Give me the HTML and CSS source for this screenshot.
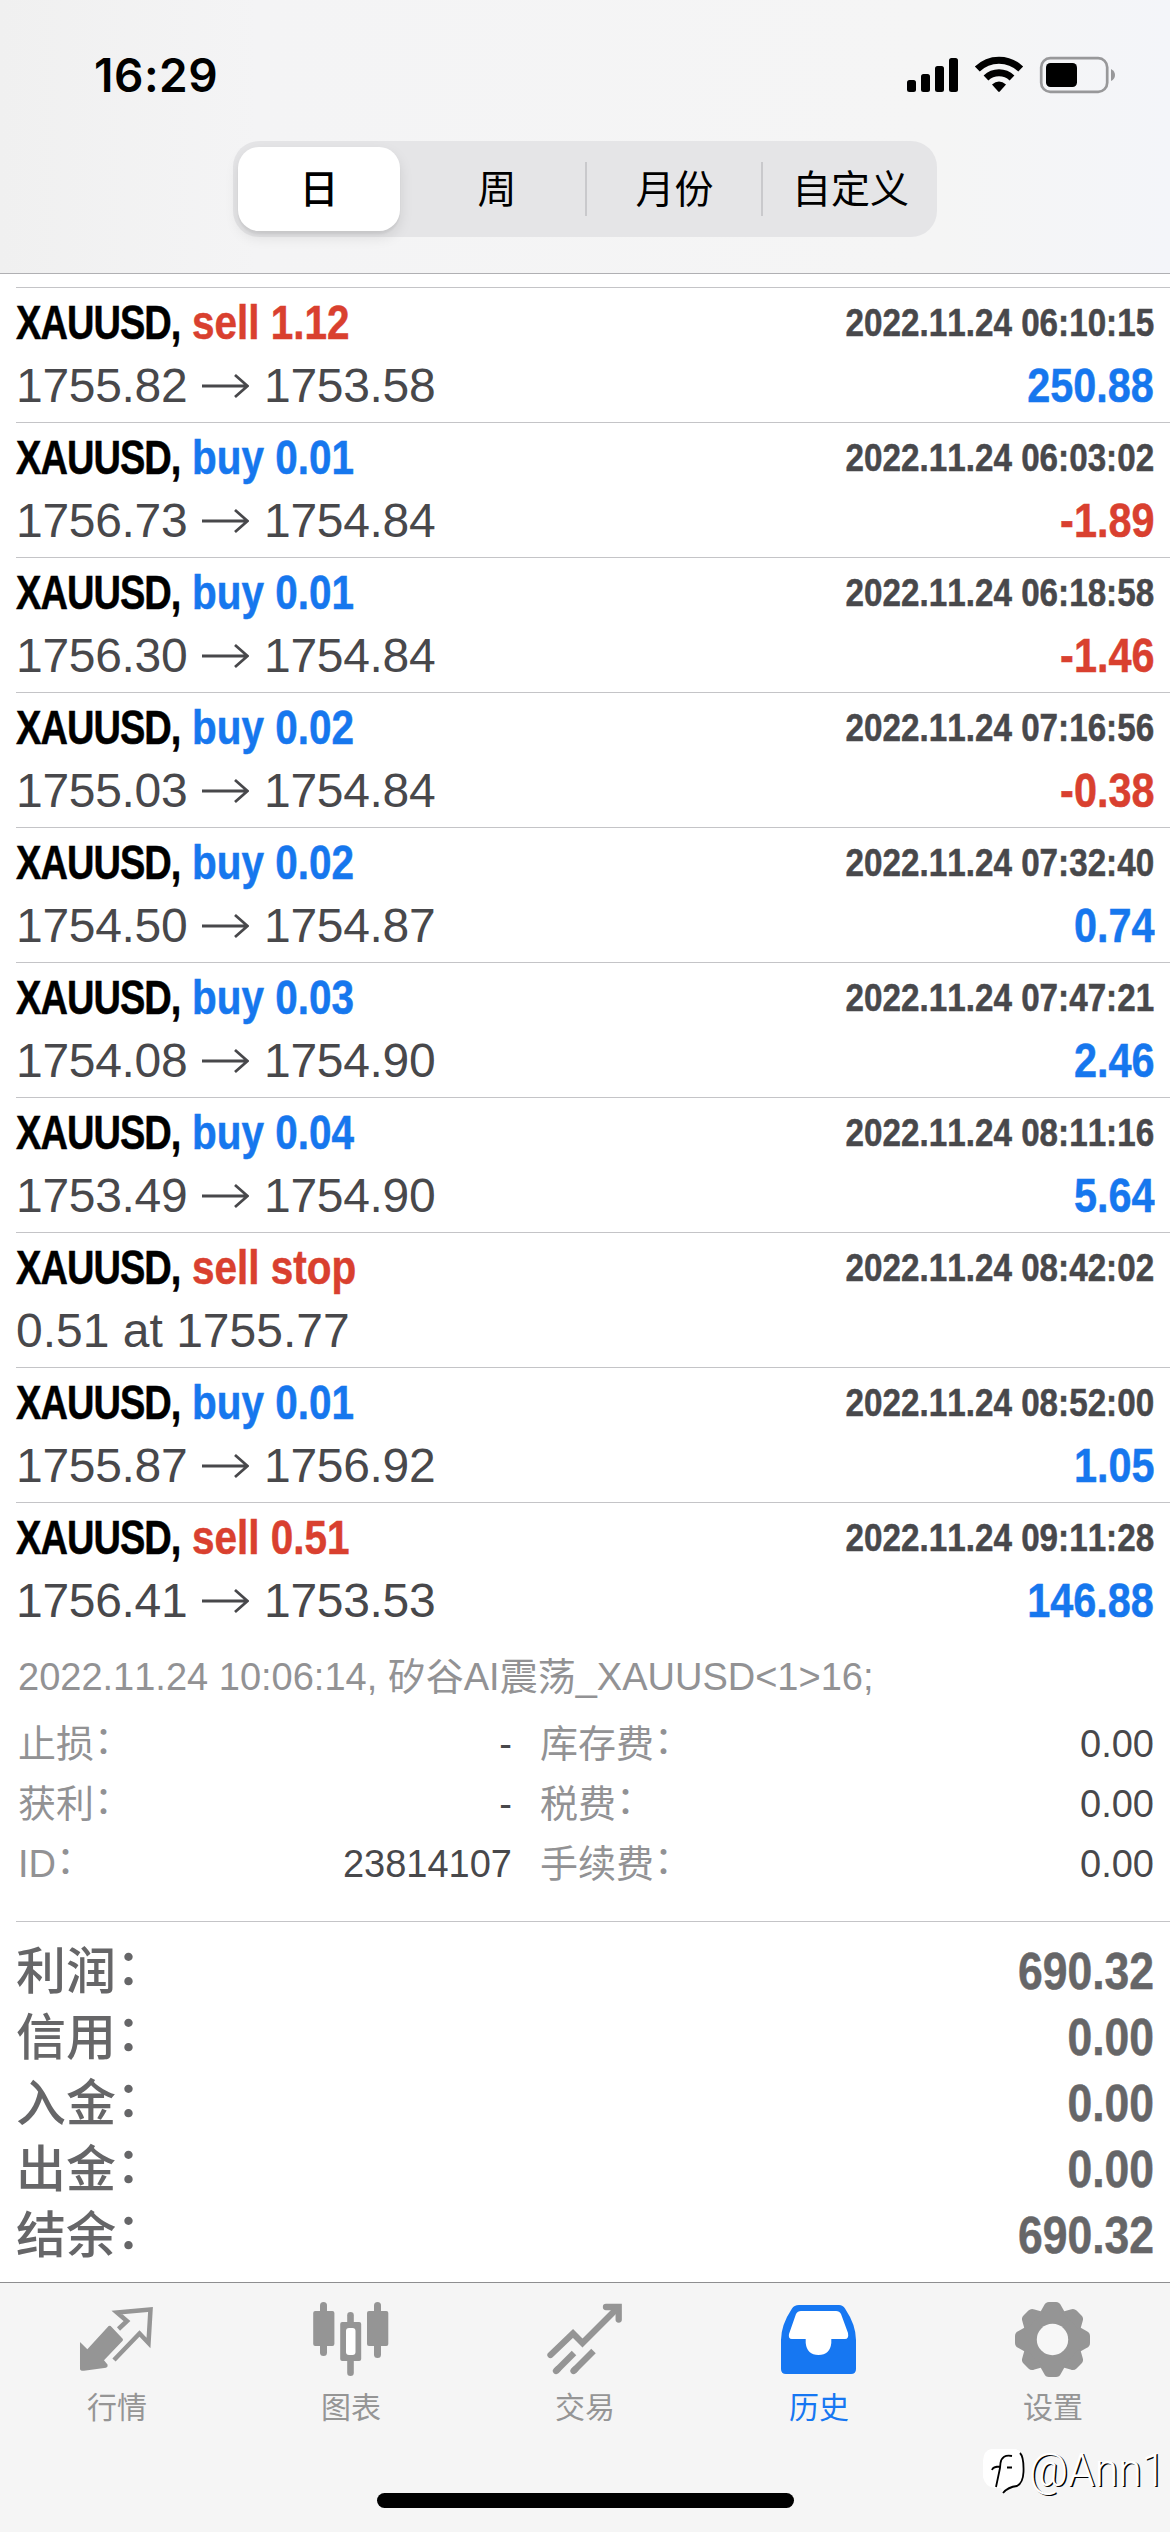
FILE: index.html
```html
<!DOCTYPE html>
<html lang="zh-CN">
<head>
<meta charset="utf-8">
<title>历史</title>
<link rel="stylesheet" href="styles.css">
</head>
<body>
<div class="screen">
  <header class="header">
    <div class="status">
      <span class="clock">16:29</span>
      <svg class="status-icons" width="212" height="40" viewBox="905 54 212 40">
        <rect x="907" y="79" width="9" height="12" rx="2.5"/>
        <rect x="921" y="73" width="9" height="18" rx="2.5"/>
        <rect x="935" y="65" width="9" height="26" rx="2.5"/>
        <rect x="949" y="57" width="9" height="34" rx="2.5"/>
        <g fill="none" stroke="#000" stroke-width="7">
          <path d="M977.300 68 A31 31 0 0 1 1020.700 68"/>
          <path d="M986 77 A19 19 0 0 1 1012 77"/>
        </g>
        <path d="M992 83.500 Q999 77.500 1006 83.500 L999.800 90.500 Q999 91.300 998.200 90.500 Z"/>
        <rect x="1041.200" y="57.200" width="66" height="33.600" rx="9" fill="none" stroke="#98989a" stroke-width="2.700"/>
        <rect x="1046" y="62" width="31" height="24" rx="4.500"/>
        <path d="M1111 68 Q1115 70 1115 74 Q1115 78 1111 80 Z" fill="#98989a"/>
      </svg>
    </div>
    <nav class="segments">
      <span class="segment selected">日</span>
      <span class="segment">周</span>
      <span class="segment divided">月份</span>
      <span class="segment divided">自定义</span>
    </nav>
  </header>

  <main class="history">
    <section class="deal"><div class="line"><span class="symbol">XAUUSD,</span><span class="side sell">sell 1.12</span><time class="time">2022.11.24 06:10:15</time></div>
      <div class="line"><span class="open">1755.82</span><svg class="arrow" viewBox="0 0 47 26"><path d="M0 13H45M33 2L45.500 13L33 24"/></svg><span>1753.58</span><span class="profit gain">250.88</span></div></section>
    <section class="deal"><div class="line"><span class="symbol">XAUUSD,</span><span class="side buy">buy 0.01</span><time class="time">2022.11.24 06:03:02</time></div>
      <div class="line"><span class="open">1756.73</span><svg class="arrow" viewBox="0 0 47 26"><path d="M0 13H45M33 2L45.500 13L33 24"/></svg><span>1754.84</span><span class="profit loss">-1.89</span></div></section>
    <section class="deal"><div class="line"><span class="symbol">XAUUSD,</span><span class="side buy">buy 0.01</span><time class="time">2022.11.24 06:18:58</time></div>
      <div class="line"><span class="open">1756.30</span><svg class="arrow" viewBox="0 0 47 26"><path d="M0 13H45M33 2L45.500 13L33 24"/></svg><span>1754.84</span><span class="profit loss">-1.46</span></div></section>
    <section class="deal"><div class="line"><span class="symbol">XAUUSD,</span><span class="side buy">buy 0.02</span><time class="time">2022.11.24 07:16:56</time></div>
      <div class="line"><span class="open">1755.03</span><svg class="arrow" viewBox="0 0 47 26"><path d="M0 13H45M33 2L45.500 13L33 24"/></svg><span>1754.84</span><span class="profit loss">-0.38</span></div></section>
    <section class="deal"><div class="line"><span class="symbol">XAUUSD,</span><span class="side buy">buy 0.02</span><time class="time">2022.11.24 07:32:40</time></div>
      <div class="line"><span class="open">1754.50</span><svg class="arrow" viewBox="0 0 47 26"><path d="M0 13H45M33 2L45.500 13L33 24"/></svg><span>1754.87</span><span class="profit gain">0.74</span></div></section>
    <section class="deal"><div class="line"><span class="symbol">XAUUSD,</span><span class="side buy">buy 0.03</span><time class="time">2022.11.24 07:47:21</time></div>
      <div class="line"><span class="open">1754.08</span><svg class="arrow" viewBox="0 0 47 26"><path d="M0 13H45M33 2L45.500 13L33 24"/></svg><span>1754.90</span><span class="profit gain">2.46</span></div></section>
    <section class="deal"><div class="line"><span class="symbol">XAUUSD,</span><span class="side buy">buy 0.04</span><time class="time">2022.11.24 08:11:16</time></div>
      <div class="line"><span class="open">1753.49</span><svg class="arrow" viewBox="0 0 47 26"><path d="M0 13H45M33 2L45.500 13L33 24"/></svg><span>1754.90</span><span class="profit gain">5.64</span></div></section>
    <section class="deal"><div class="line"><span class="symbol">XAUUSD,</span><span class="side sell">sell stop</span><time class="time">2022.11.24 08:42:02</time></div>
      <div class="line"><span>0.51 at 1755.77</span></div></section>
    <section class="deal"><div class="line"><span class="symbol">XAUUSD,</span><span class="side buy">buy 0.01</span><time class="time">2022.11.24 08:52:00</time></div>
      <div class="line"><span class="open">1755.87</span><svg class="arrow" viewBox="0 0 47 26"><path d="M0 13H45M33 2L45.500 13L33 24"/></svg><span>1756.92</span><span class="profit gain">1.05</span></div></section>
    <section class="deal"><div class="line"><span class="symbol">XAUUSD,</span><span class="side sell">sell 0.51</span><time class="time">2022.11.24 09:11:28</time></div>
      <div class="line"><span class="open">1756.41</span><svg class="arrow" viewBox="0 0 47 26"><path d="M0 13H45M33 2L45.500 13L33 24"/></svg><span>1753.53</span><span class="profit gain">146.88</span></div></section>

    <section class="details">
      <p class="comment">2022.11.24 10:06:14, 矽谷AI震荡_XAUUSD&lt;1&gt;16;</p>
      <dl class="fields">
        <dt>止损<i class="colon">：</i></dt><dd>-</dd><dt>库存费<i class="colon">：</i></dt><dd>0.00</dd>
        <dt>获利<i class="colon">：</i></dt><dd>-</dd><dt>税费<i class="colon">：</i></dt><dd>0.00</dd>
        <dt>ID<i class="colon">：</i></dt><dd>23814107</dd><dt>手续费<i class="colon">：</i></dt><dd>0.00</dd>
      </dl>
    </section>

    <dl class="summary">
      <dt>利润<i class="colon">：</i></dt><dd>690.32</dd>
      <dt>信用<i class="colon">：</i></dt><dd>0.00</dd>
      <dt>入金<i class="colon">：</i></dt><dd>0.00</dd>
      <dt>出金<i class="colon">：</i></dt><dd>0.00</dd>
      <dt>结余<i class="colon">：</i></dt><dd>690.32</dd>
    </dl>
  </main>

  <footer class="footer">
    <nav class="tabs">
      <a class="tab">
        <svg viewBox="0 0 234 240">
          <path d="M240 156 L262 178 L326 108 Q329 106 332 108 L368 146 Q370 149 368 152 L312 211 L323 224 Q324 231 318 233 L252 242 Q240 243 240 236 Z" transform="scale(.3333)"/>
          <path class="stroke" d="M118.500 39 L127 31 L117 22.500 L150.500 19.500 L148.500 53 L139.500 43.500 L114 70"/>
        </svg>
        <span>行情</span>
      </a>
      <a class="tab">
        <svg viewBox="0 0 234 240">
          <g>
            <rect x="79.200" y="21" width="21.200" height="35" rx="2"/><rect x="86" y="12" width="7" height="54" rx="3.500"/>
            <rect x="133" y="21" width="21.300" height="35" rx="2"/><rect x="140" y="12" width="7" height="56" rx="3.500"/>
            <rect x="113.200" y="22" width="6.600" height="64" rx="3.300"/><rect x="106.200" y="32" width="21" height="39" rx="2"/>
          </g>
          <rect x="112" y="38" width="9.500" height="27" rx="3" fill="#fff"/>
        </svg>
        <span>图表</span>
      </a>
      <a class="tab">
        <svg viewBox="0 0 234 240">
          <g class="stroke thick" stroke-linecap="round">
            <path d="M82.500 65 L105 43.500 L114.500 53 L149 18.500"/>
            <path d="M138 17 H150.700 V29.500" stroke-linejoin="miter"/>
            <path d="M88 81 L106 63" stroke-linecap="butt"/><path d="M88 81 L90 79"/>
            <path d="M105.500 81 L125.500 61" stroke-linecap="butt"/><path d="M105.500 81 L107.500 79"/>
          </g>
        </svg>
        <span>交易</span>
      </a>
      <a class="tab active">
        <svg viewBox="0 0 234 240">
          <path d="M97 15 H137 Q141 15 143 18.500 Q154 35 154 50 V79 Q154 84 149 84 H84 Q79 84 79 79 V50 Q79 35 90 18.500 Q92 15 97 15 Z"/>
          <path d="M99 21 H134 Q137.500 21 139 24 L146 43 Q147 49 143 49 H129.300 V53 Q128 65 116.500 65 Q105 65 103.700 53 V49 H90 Q86 49 87 44 L94 24 Q95.500 21 99 21 Z" fill="#fff"/>
        </svg>
        <span>历史</span>
      </a>
      <a class="tab">
        <svg viewBox="0 0 234 240">
          <g transform="translate(116.500 49.500)">
            <circle r="29.500"/>
            <g>
              <path id="tooth" d="M-13 -26 L-8.500 -34 Q-7 -37.500 -3.500 -37.500 H3.500 Q7 -37.500 8.500 -34 L13 -26 Z"/>
              <use href="#tooth" transform="rotate(45)"/><use href="#tooth" transform="rotate(90)"/><use href="#tooth" transform="rotate(135)"/>
              <use href="#tooth" transform="rotate(180)"/><use href="#tooth" transform="rotate(225)"/><use href="#tooth" transform="rotate(270)"/><use href="#tooth" transform="rotate(315)"/>
            </g>
            <circle r="15.700" fill="#f7f7f7"/>
          </g>
        </svg>
        <span>设置</span>
      </a>
    </nav>
    <div class="home-indicator"></div>
    <div class="watermark">
      <svg width="46" height="50" viewBox="0 0 46 50">
        <path d="M10 2 H34 Q42 3 43 15 V28 Q42 38 34 40 Q26 41 22 46 L20 41 H14 Q4 40 2 30 V14 Q3 3 10 2 Z" fill="#fff"/>
        <path d="M39 6 Q43 10 42.500 25 Q42 36 36 39 Q27 40 22 46" fill="none" stroke="#000" stroke-width="1.800"/>
        <path d="M31 9 Q21 7 19.500 16 L19 21 L15 40 M11 23 Q12 19.500 19 19.500 M26 20.500 H31" fill="none" stroke="#000" stroke-width="1.800"/>
      </svg>
      <span class="author">@Ann1</span>
    </div>
  </footer>
</div>
</body>
</html>
```
FILE: styles.css
```css
* { box-sizing: border-box; }
body, p, dl, dd { margin: 0; }
body {
  font-family: "Liberation Sans", "Noto Sans CJK SC", sans-serif;
  font-kerning: none;
  background: #fff;
  color: #48484b;
}
.screen {
  display: flex;
  flex-direction: column;
  width: 1170px;
  height: 2532px;
  overflow: hidden;
}

/* Header */
.header {
  flex: none;
  display: flex;
  flex-direction: column;
  align-items: center;
  height: 274px;
  background: linear-gradient(90deg, #f0f0f0, #f4f4f5 22%, #f5f5f5 80%, #f4f5f9);
  border-bottom: 1px solid #b0b0b3;
}
.status {
  flex: none;
  display: flex;
  justify-content: space-between;
  align-items: center;
  width: 100%;
  height: 141px;
  padding: 8px 53px 0 94px;
}
.clock {
  font: 600 46px/1 Inter, sans-serif;
  letter-spacing: .5px;
  color: #000;
}
.segments {
  display: grid;
  grid-template-columns: repeat(4, 176px);
  width: 704px;
  height: 96px;
  border-radius: 26px;
  background: #e5e5e7;
  color: #000;
}
.segment {
  display: flex;
  align-items: center;
  justify-content: center;
  font-size: 39px;
  line-height: 1;
}
.selected {
  margin: 6px 9px 6px 5px;
  border-radius: 21px;
  background: #fff;
  font-weight: 500;
  box-shadow: 0 6px 14px rgba(0, 0, 0, .1), 0 3px 2px rgba(0, 0, 0, .05);
}
.divided {
  padding-left: 3px;
  background: linear-gradient(#c9c9cc, #c9c9cc) left center / 2px 54px no-repeat;
}

/* Deals */
.history {
  flex: none;
  height: 2008px;
  padding: 13px 0 0 16px;
}
.deal {
  height: 135px;
  padding-top: 4px;
  border-top: 1px solid #c4c4c7;
}
.line {
  display: flex;
  align-items: center;
  height: 63px;
  padding-right: 16px;
  font-size: 48px;
  line-height: 63px;
  white-space: nowrap;
}
.line:first-child { height: 62px; line-height: 62px; }
.symbol, .side, .time, .profit, .summary dd {
  font-weight: 700;
  -webkit-text-stroke: .5px;
}
.symbol {
  width: 176px;
  color: #000;
  letter-spacing: -1.2px;
  transform: scaleX(.792);
  transform-origin: left;
}
.side { transform: scaleX(.843); transform-origin: left; }
.sell, .loss { color: #d9402f; }
.buy, .gain { color: #1677ee; }
.time {
  margin-left: auto;
  font-size: 39px;
  transform: scaleX(.852);
  transform-origin: right;
}
.open { width: 186px; letter-spacing: -.3px; }
.arrow {
  width: 47px;
  height: 26px;
  margin-right: 15px;
  fill: none;
  stroke: #48484b;
  stroke-width: 2.800;
}
.arrow + span { letter-spacing: -.3px; }
.profit {
  margin-left: auto;
  transform: scaleX(.862);
  transform-origin: right;
}

/* Expanded deal */
.details {
  height: 284px;
  padding: 9px 16px 0 2px;
  font-size: 38px;
}
.comment {
  height: 62px;
  line-height: 62px;
  color: #929294;
  white-space: nowrap;
}
.fields {
  display: grid;
  grid-template-columns: 130px 364px 150px 1fr;
  grid-auto-rows: 60px;
  padding-top: 6px;
  line-height: 60px;
}
.fields dt { color: #929294; white-space: nowrap; }
.fields dt:nth-of-type(even) { padding-left: 28px; }
.fields dd { text-align: right; }
.colon { font-style: normal; line-height: 1; vertical-align: 4px; }

/* Summary */
.summary {
  display: grid;
  grid-template-columns: 1fr 1fr;
  grid-auto-rows: 66px;
  padding: 17px 16px 0 0;
  border-top: 1px solid #c4c4c7;
  color: #666668;
  font-size: 51px;
  line-height: 66px;
}
.summary dt { font-size: 50px; font-weight: 500; }
.summary dd { text-align: right; transform: scaleX(.872); transform-origin: right; }

/* Tab bar */
.footer {
  flex: 1;
  position: relative;
  border-top: 1px solid #8e8e90;
  background: #f5f5f5;
}
.tabs {
  display: grid;
  grid-template-columns: repeat(5, 234px);
  height: 210px;
}
.tab {
  display: flex;
  flex-direction: column;
  align-items: center;
  color: #959595;
  font-size: 30px;
  line-height: 40px;
}
.tab svg {
  width: 234px;
  height: 240px;
  margin: 7px 0 -142px;
  fill: currentColor;
}
.tab .stroke { fill: none; stroke: currentColor; stroke-width: 4.500; }
.tab .thick { stroke-width: 6.300; }
.active { color: #1677f2; }
.home-indicator {
  width: 417px;
  height: 15px;
  margin: 0 auto;
  border-radius: 8px;
  background: #000;
}
.watermark {
  position: absolute;
  left: 981px;
  top: 164px;
  display: flex;
}
.author {
  font: 300 46px/46px Roboto, sans-serif;
  color: #fff;
  text-shadow: 1.500px 1px 0 #000;
  transform: scaleX(.93);
  transform-origin: left;
  margin-left: 2px;
}
```
